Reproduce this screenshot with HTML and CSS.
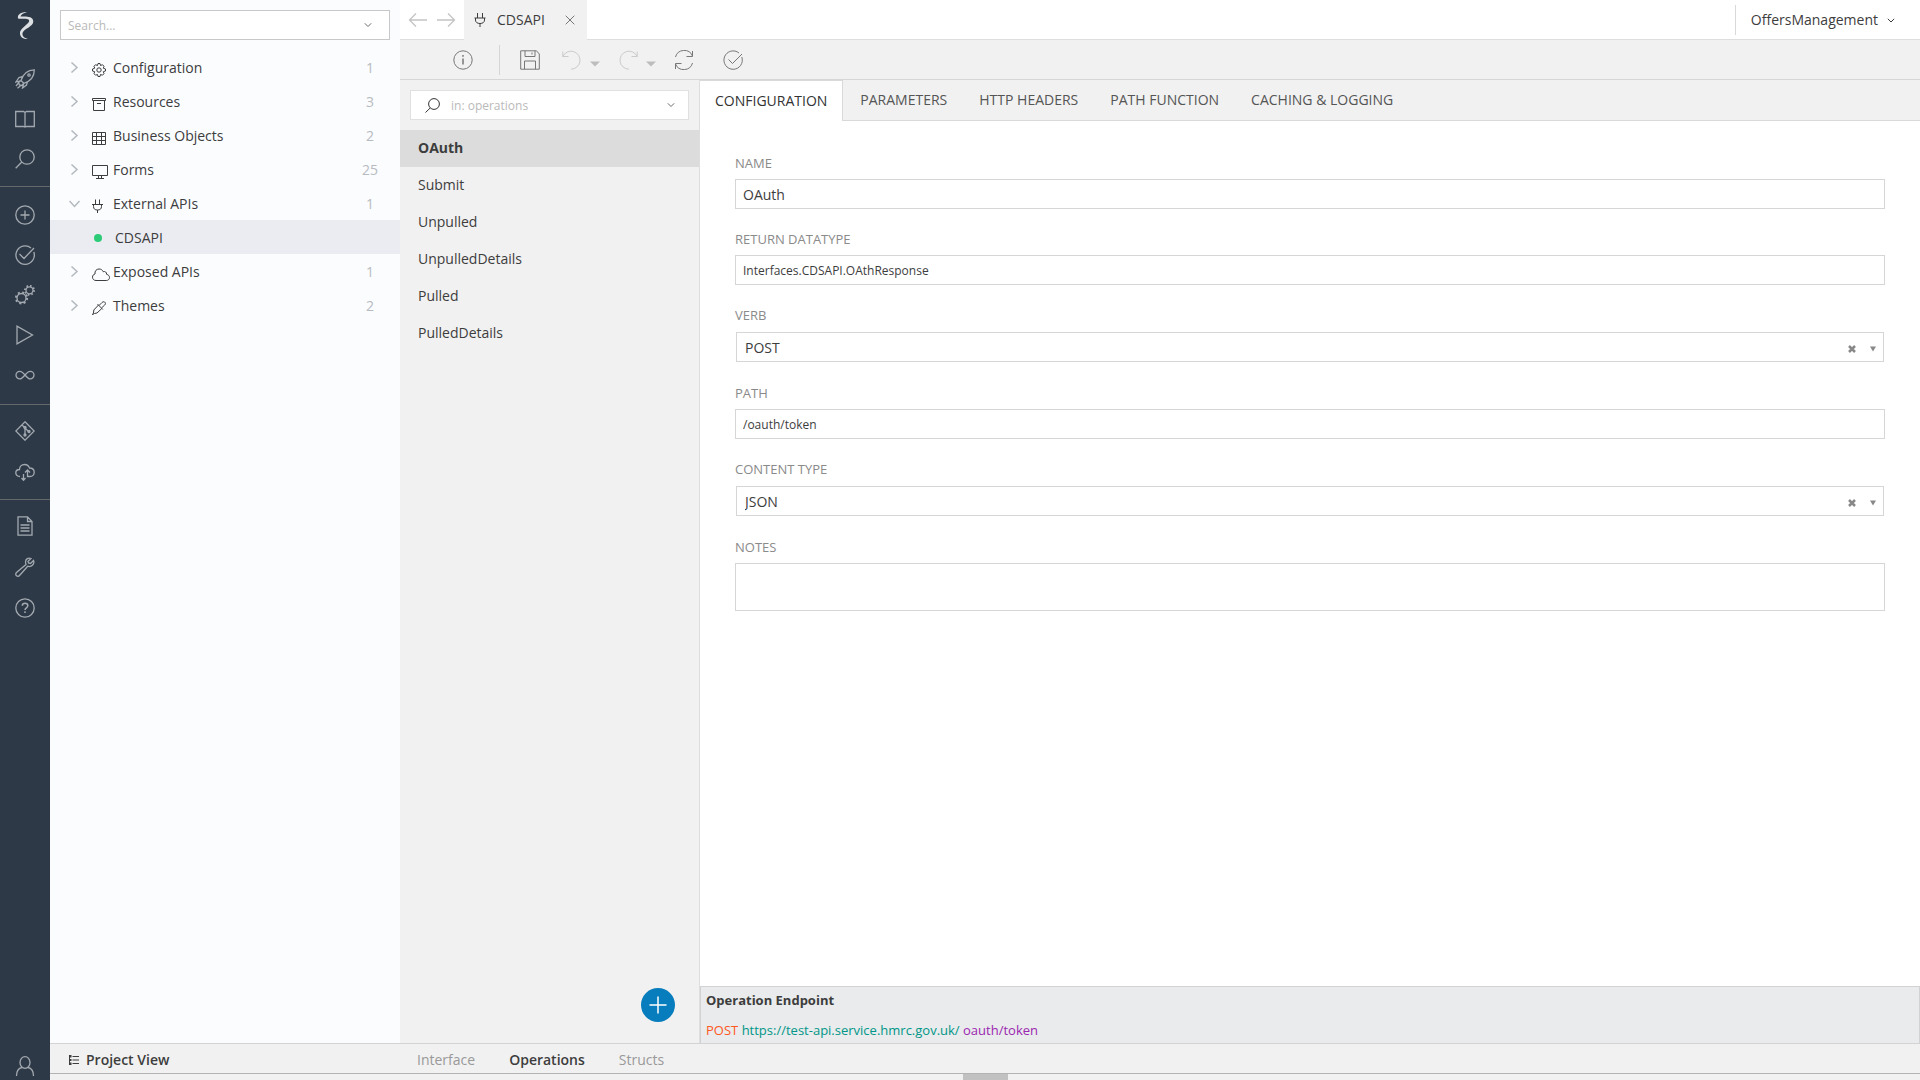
FILE: index.html
```html
<!DOCTYPE html>
<html lang="en">
<head>
    <meta charset="UTF-8">
    <meta name="viewport" content="width=device-width, initial-scale=1.0">
    <title>OffersManagement - CDSAPI</title>
    <link rel="stylesheet" href="styles.css">
</head>
<body>
    <nav class="rail" aria-label="Main">
        <a href="#" class="rail-logo" aria-label="Home">
            <svg width="20" height="30" viewBox="0 0 20 30"><path class="logo-fill" d="M12 1C6 1 2 3.500 3 7.500C6 8.500 11 6.800 13.500 8.500C17 11.500 6 16 5 21.500C4.500 25.500 8 28.500 13 28C9 27 7 25 7.500 22C9 17.500 18 16 18.300 10.500C18 4.500 10 5.500 5.500 5.500C6 3.500 8 2.500 12 1Z"/></svg>
        </a>
        <div class="rail-group">
            <a href="#" class="rail-link" aria-label="Start"><svg width="20" height="20" viewBox="0 0 20 20"><path d="M6 11.500C8 5 12 1 19.300 .8C19.300 8 15 12.500 8.800 14.300ZM8 7.500L4 8.500L1 13L6 11.500M12.500 12.500L11.500 16L7.500 19L8.800 14.300M6 11.500L3.500 13.500L4.500 16L6.800 16.500L8.800 14.300M3.500 14L1 17M5.800 16.500L2.500 19.300"/><circle cx="14" cy="6" r="1.200"/></svg></a>
            <a href="#" class="rail-link" aria-label="Library"><svg width="20" height="20" viewBox="0 0 20 20"><path d="M.7 2.500H8.500L10 3.500L11.500 2.500H19.300V17.500H11.500L10 18L8.500 17.500H.7ZM10 3.500V18"/></svg></a>
            <a href="#" class="rail-link" aria-label="Search"><svg width="20" height="20" viewBox="0 0 20 20"><circle cx="12" cy="8" r="7.200"/><path d="M6.800 13L.7 19.200"/></svg></a>
        </div>
        <div class="rail-group">
            <a href="#" class="rail-link" aria-label="Add"><svg width="20" height="20" viewBox="0 0 20 20"><circle cx="10" cy="10" r="9.200"/><path d="M10 5.500V14.500M5.500 10H14.500"/></svg></a>
            <a href="#" class="rail-link" aria-label="Validate"><svg width="20" height="20" viewBox="0 0 20 20"><path d="M16 3A9.200 9.200 0 1 0 18.800 7M4.500 9L9 13.500L19 3"/></svg></a>
            <a href="#" class="rail-link" aria-label="Settings"><svg width="20" height="20" viewBox="0 0 20 20"><circle cx="6.500" cy="13" r="4.500"/><circle class="teeth" cx="6.500" cy="13" r="5.600" stroke-dasharray="2 2.400"/><circle cx="14.500" cy="5.300" r="3.500"/><circle class="teeth" cx="14.500" cy="5.300" r="4.500" stroke-dasharray="1.500 2.030"/></svg></a>
            <a href="#" class="rail-link" aria-label="Run"><svg width="20" height="20" viewBox="0 0 20 20"><path d="M2 1.200V18.800L17.500 10Z"/></svg></a>
            <a href="#" class="rail-link" aria-label="Processes"><svg width="20" height="20" viewBox="0 0 20 20"><path d="M10 10C8 7.500 6.800 6.300 4.800 6.300A3.800 3.800 0 0 0 4.800 13.900C6.800 13.900 8 12.500 10 10C12 7.500 13.200 6.300 15.200 6.300A3.800 3.800 0 0 1 15.200 13.900C13.200 13.900 12 12.500 10 10Z"/></svg></a>
        </div>
        <div class="rail-group rail-group-low">
            <a href="#" class="rail-link" aria-label="Git"><svg width="20" height="20" viewBox="0 0 20 20"><path d="M10 .8L19.200 10L10 19.200L.8 10ZM7 4L10 7V14M10 7L13.500 10.500"/><circle class="dot" cx="10" cy="6.500" r="1"/><circle class="dot" cx="10" cy="14" r="1"/><circle class="dot" cx="14" cy="10.500" r="1"/></svg></a>
            <a href="#" class="rail-link" aria-label="Sync"><svg width="20" height="20" viewBox="0 0 20 20"><path d="M5 14.500C2.500 14.500 .8 13 .8 11C.8 9 2.300 7.500 4.500 7.500C4.500 4.500 6.500 2.500 9.500 2.500C12 2.500 13.800 4 14.500 6C17.500 6 19.200 8 19.200 10.200C19.200 12.500 17.500 14.500 15 14.500H12.500V8.500M10 10.500L12.500 8L15 10.500M8.500 12V18M6.500 16L8.500 18.300L10.500 16"/></svg></a>
        </div>
        <div class="rail-group rail-group-low">
            <a href="#" class="rail-link" aria-label="Logs"><svg width="20" height="20" viewBox="0 0 20 20"><path d="M3 .8H12.500L17 5.500V19.200H3ZM12.500 .8V5.500H17M5.500 9H14.500M5.500 12H14.500M5.500 15H14.500"/></svg></a>
            <a href="#" class="rail-link" aria-label="Tools"><svg width="20" height="20" viewBox="0 0 20 20"><path d="M18.500 3.500L15.500 6.500L13.500 6L13 4.500L16 1.500C13.500 .3 10.500 2 10.500 5C10.500 6 10.700 6.500 11 7.500L1.500 15.500C.5 16.500 .5 18 1.500 18.700C2.500 19.500 3.800 19.300 4.500 18.500L12.700 9.200C16 10.500 20 7.500 18.500 3.500Z"/></svg></a>
            <a href="#" class="rail-link" aria-label="Help"><svg width="20" height="20" viewBox="0 0 20 20"><circle cx="10" cy="10" r="9.200"/><path class="heavy" d="M7.300 7.800C7.300 4.500 12.800 4.500 12.800 7.800C12.800 9.800 10 9.800 10 12M10 13.300V15"/></svg></a>
        </div>
        <a href="#" class="rail-link rail-user" aria-label="Account"><svg width="20" height="20" viewBox="0 0 20 20"><ellipse cx="10" cy="6.500" rx="5" ry="5.800"/><path d="M1.500 20C1.500 14.500 4.500 12 7 11.500M18.500 20C18.500 14.500 15.500 12 13 11.500"/></svg></a>
    </nav>

    <div class="page">
        <div class="workspace">
            <aside class="sidebar">
                <div class="search">
                    <input type="text" class="search-input" placeholder="Search..." aria-label="Search project">
                    <button type="button" class="icon-btn" aria-label="Search options"><svg width="8" height="8" viewBox="0 0 8 8"><path d="M.8 2.300L4 5.500L7.200 2.300"/></svg></button>
                </div>
                <ul class="tree">
                    <li><a href="#" class="tree-row"><svg class="arrow" width="12" height="12" viewBox="0 0 12 12"><path d="M2.500 .5L8 5.500L2.500 10.500"/></svg><svg class="tree-icon" width="18" height="14" viewBox="0 0 18 14"><path d="M5.500 2.500L6 .5H8L8.500 2.500L10.500 1.700L12 3.300L11.300 5.200L13.500 6V8L11.300 8.700L12 10.700L10.500 12.200L8.500 11.500L8 13.500H6L5.500 11.500L3.500 12.200L2 10.700L2.700 8.700L.5 8V6L2.700 5.200L2 3.300L3.500 1.700Z"/><circle cx="7" cy="7" r="2.200"/></svg><span class="tree-text">Configuration</span><span class="count">1</span></a></li>
                    <li><a href="#" class="tree-row"><svg class="arrow" width="12" height="12" viewBox="0 0 12 12"><path d="M2.500 .5L8 5.500L2.500 10.500"/></svg><svg class="tree-icon" width="18" height="14" viewBox="0 0 18 14"><path d="M.5 1.500H13.500V3.500H.5ZM1.500 3.500V13.500H12.500V3.500M5 6.500H9"/></svg><span class="tree-text">Resources</span><span class="count">3</span></a></li>
                    <li><a href="#" class="tree-row"><svg class="arrow" width="12" height="12" viewBox="0 0 12 12"><path d="M2.500 .5L8 5.500L2.500 10.500"/></svg><svg class="tree-icon" width="18" height="14" viewBox="0 0 18 14"><path d="M.5 1.500H13.500V13.500H.5ZM.5 5.500H13.500M.5 9.500H13.500M4.500 1.500V13.500M9.500 1.500V13.500"/></svg><span class="tree-text">Business Objects</span><span class="count">2</span></a></li>
                    <li><a href="#" class="tree-row"><svg class="arrow" width="12" height="12" viewBox="0 0 12 12"><path d="M2.500 .5L8 5.500L2.500 10.500"/></svg><svg class="tree-icon" width="18" height="14" viewBox="0 0 18 14"><path d="M.5 .5H15.500V10.500H.5ZM6.500 10.500V13M9.500 10.500V13M4 13.500H12"/></svg><span class="tree-text">Forms</span><span class="count">25</span></a></li>
                    <li>
                        <a href="#" class="tree-row"><svg class="arrow" width="12" height="12" viewBox="0 0 12 12"><path d="M.5 3L5.500 8.500L10.500 3"/></svg><svg class="tree-icon" width="18" height="14" viewBox="0 0 18 14"><path d="M0 5.500H11M1.500 5.500V7.500C1.500 10 3 11 5.500 11C8 11 9.500 10 9.500 7.500V5.500M3.500 .5V5.500M7.500 .5V5.500M5.500 11V14"/></svg><span class="tree-text">External APIs</span><span class="count">1</span></a>
                        <ul class="tree-children">
                            <li><a href="#" class="tree-leaf"><span class="status"></span>CDSAPI</a></li>
                        </ul>
                    </li>
                    <li><a href="#" class="tree-row"><svg class="arrow" width="12" height="12" viewBox="0 0 12 12"><path d="M2.500 .5L8 5.500L2.500 10.500"/></svg><svg class="tree-icon" width="18" height="14" viewBox="0 0 18 14"><path d="M4 13.500C1.800 13.500 .5 12 .5 10.200C.5 8.500 1.500 7.300 3 7C2.500 4 4.500 2 7 2C9 2 10.500 3 11.200 4.700C13 4 14.800 5.300 14.600 7.300C16.500 7.700 17.500 9 17.500 10.500C17.500 12.200 16.200 13.500 14.300 13.500Z"/></svg><span class="tree-text">Exposed APIs</span><span class="count">1</span></a></li>
                    <li><a href="#" class="tree-row"><svg class="arrow" width="12" height="12" viewBox="0 0 12 12"><path d="M2.500 .5L8 5.500L2.500 10.500"/></svg><svg class="tree-icon" width="18" height="14" viewBox="0 0 18 14"><path d="M5.500 3L10.800 8.500M7 4.500L10 1.500C12 -.5 14.800 2 12.700 4L9.500 7M6.500 4L1.800 9L1.500 12L.3 13.700L2.500 12.500L5 12L9.800 7.500"/></svg><span class="tree-text">Themes</span><span class="count">2</span></a></li>
                </ul>
            </aside>

            <main class="main">
                <header class="topbar">
                    <div class="history">
                        <button type="button" class="icon-btn" aria-label="Back"><svg width="20" height="16" viewBox="0 0 20 16"><path d="M8 1.500L1.500 8L8 14.500M1.500 8H19"/></svg></button>
                        <button type="button" class="icon-btn" aria-label="Forward"><svg width="20" height="16" viewBox="0 0 20 16"><path d="M12 1.500L18.500 8L12 14.500M1 8H18.500"/></svg></button>
                    </div>
                    <div class="file-tab">
                        <svg width="12" height="14" viewBox="0 0 12 14"><path d="M.5 5H11.500M1.500 5V7C1.500 9.500 3.500 10.500 6 10.500C8.500 10.500 10.500 9.500 10.500 7V5M3.500 0V5M8.500 0V5M6 10.500V14"/></svg>
                        <a href="#" class="file-name">CDSAPI</a>
                        <button type="button" class="icon-btn" aria-label="Close CDSAPI"><svg width="10" height="10" viewBox="0 0 10 10"><path d="M.7 .7L9.300 9.300M9.300 .7L.7 9.300"/></svg></button>
                    </div>
                    <button type="button" class="project-menu">OffersManagement<svg width="8" height="8" viewBox="0 0 8 8"><path d="M.8 2.800L4 6L7.200 2.800"/></svg></button>
                </header>

                <div class="toolbar">
                    <button type="button" class="icon-btn" aria-label="Information"><svg width="20" height="20" viewBox="0 0 20 20"><circle cx="10" cy="10" r="9.200"/><path class="heavy" d="M10 5V6.800M10 8.500V14.500"/></svg></button>
                    <span class="toolbar-line"></span>
                    <button type="button" class="icon-btn" aria-label="Save"><svg width="20" height="20" viewBox="0 0 20 20"><path d="M.7 .8H16.500L19.300 4V19.200H.7ZM5 .8V6.500H15V.8M12 2.500V4.500M4.500 19.200V11H15.500V19.200"/></svg></button>
                    <button type="button" class="icon-btn undo" disabled><svg role="img" aria-label="Undo" width="20" height="20" viewBox="0 0 20 20"><path d="M.8 1.500V6.500H6.500M.8 6.500A9 9 0 1 1 9 19.200"/></svg><svg width="10" height="6" viewBox="0 0 10 6"><path class="solid" d="M0 .5H10L5 5.500Z"/></svg></button>
                    <button type="button" class="icon-btn redo" disabled><svg role="img" aria-label="Redo" width="20" height="20" viewBox="0 0 20 20"><path d="M19.200 1.500V6.500H13.500M19.200 6.500A9 9 0 1 0 11 19.200"/></svg><svg width="10" height="6" viewBox="0 0 10 6"><path class="solid" d="M0 .5H10L5 5.500Z"/></svg></button>
                    <button type="button" class="icon-btn refresh" aria-label="Refresh"><svg width="20" height="20" viewBox="0 0 20 20"><path d="M1.500 7A9 9 0 0 1 18.500 6M18.500 1V6.500H12.500M18.500 13A9 9 0 0 1 1.500 14M1.500 19V13.500H7.500"/></svg></button>
                    <button type="button" class="icon-btn" aria-label="Validate"><svg width="20" height="20" viewBox="0 0 20 20"><path d="M16 3A9.200 9.200 0 1 0 18.800 7M5.500 9.500L9.500 13.500L19 4"/></svg></button>
                </div>

                <div class="content">
                    <section class="operations">
                        <div class="search">
                            <svg class="search-icon" width="15" height="15" viewBox="0 0 15 15"><circle cx="9" cy="6" r="5.400"/><path d="M5.200 10L.5 14.500"/></svg>
                            <input type="text" class="search-input" placeholder="in: operations" aria-label="Search operations">
                            <button type="button" class="icon-btn" aria-label="Filter options"><svg width="8" height="8" viewBox="0 0 8 8"><path d="M.8 2.300L4 5.500L7.200 2.300"/></svg></button>
                        </div>
                        <ul class="operation-list">
                            <li><a href="#" class="operation active">OAuth</a></li>
                            <li><a href="#" class="operation">Submit</a></li>
                            <li><a href="#" class="operation">Unpulled</a></li>
                            <li><a href="#" class="operation">UnpulledDetails</a></li>
                            <li><a href="#" class="operation">Pulled</a></li>
                            <li><a href="#" class="operation">PulledDetails</a></li>
                        </ul>
                        <button type="button" class="add-btn" aria-label="Add operation"><svg width="18" height="18" viewBox="0 0 18 18"><path d="M9 .5V17.500M.5 9H17.500"/></svg></button>
                    </section>

                    <section class="detail">
                        <div class="tabs">
                            <a href="#" class="tab active">CONFIGURATION</a>
                            <a href="#" class="tab">PARAMETERS</a>
                            <a href="#" class="tab">HTTP HEADERS</a>
                            <a href="#" class="tab">PATH FUNCTION</a>
                            <a href="#" class="tab">CACHING &amp; LOGGING</a>
                        </div>

                        <form class="form">
                            <div class="field">
                                <label for="name">NAME</label>
                                <input type="text" id="name" class="text-large" value="OAuth">
                            </div>
                            <div class="field">
                                <label for="datatype">RETURN DATATYPE</label>
                                <input type="text" id="datatype" value="Interfaces.CDSAPI.OAthResponse">
                            </div>
                            <div class="field">
                                <label for="verb">VERB</label>
                                <div class="select">
                                    <select id="verb"><option>POST</option></select>
                                    <button type="button" class="icon-btn" aria-label="Clear verb"><svg width="8" height="8" viewBox="0 0 8 8"><path d="M1 1L7 7M7 1L1 7"/></svg></button>
                                    <svg class="select-arrow" width="6" height="6" viewBox="0 0 6 6"><path class="solid" d="M0 .5H6L3 5.500Z"/></svg>
                                </div>
                            </div>
                            <div class="field">
                                <label for="path">PATH</label>
                                <input type="text" id="path" value="/oauth/token">
                            </div>
                            <div class="field">
                                <label for="content-type">CONTENT TYPE</label>
                                <div class="select">
                                    <select id="content-type"><option>JSON</option></select>
                                    <button type="button" class="icon-btn" aria-label="Clear content type"><svg width="8" height="8" viewBox="0 0 8 8"><path d="M1 1L7 7M7 1L1 7"/></svg></button>
                                    <svg class="select-arrow" width="6" height="6" viewBox="0 0 6 6"><path class="solid" d="M0 .5H6L3 5.500Z"/></svg>
                                </div>
                            </div>
                            <div class="field">
                                <label for="notes">NOTES</label>
                                <textarea id="notes"></textarea>
                            </div>
                        </form>

                        <div class="endpoint">
                            <h2>Operation Endpoint</h2>
                            <p><span class="verb">POST</span> <span class="host">https://test-api.service.hmrc.gov.uk/</span> <span class="path">oauth/token</span></p>
                        </div>
                    </section>
                </div>
            </main>
        </div>

        <footer class="footer">
            <a href="#" class="project-view"><svg width="10" height="10" viewBox="0 0 10 10"><path d="M3.500 1.500H10M3.500 5H10M3.500 8.500H10"/><path class="solid" d="M0 0H2.500V2.500H0ZM0 2.500H1V10H0ZM1 4H2.500V6H1ZM1 7.500H2.500V10H1Z"/></svg>Project View</a>
            <a href="#" class="view-link">Interface</a>
            <a href="#" class="view-link active">Operations</a>
            <a href="#" class="view-link">Structs</a>
        </footer>
        <div class="drawer"><span class="drawer-handle"></span></div>
    </div>
</body>
</html>
```

FILE: styles.css
```css
* {
    box-sizing: border-box;
}
body {
    margin: 0;
    display: flex;
    min-height: 100vh;
    font-family: "Open Sans", sans-serif;
    font-size: 14px;
    line-height: 20px;
    color: #3d3d3d;
    background-color: #fff;
}
a {
    color: inherit;
    text-decoration: none;
}
ul {
    list-style: none;
    margin: 0;
    padding: 0;
}
input, select, textarea, button {
    font-family: inherit;
    color: inherit;
}
svg {
    display: block;
    flex: none;
    fill: none;
    stroke: currentColor;
}
svg .solid {
    fill: currentColor;
    stroke: none;
}
svg .heavy {
    stroke-width: 1.5;
}
.icon-btn {
    display: flex;
    align-items: center;
    padding: 0;
    border: none;
    background: none;
    cursor: pointer;
}

/* left icon rail */
.rail {
    display: flex;
    flex-direction: column;
    flex: none;
    width: 50px;
    background-color: #2d3947;
    color: #a3a9b0;
}
.rail-logo {
    display: flex;
    justify-content: center;
    height: 59px;
    padding-top: 11px;
}
.logo-fill {
    fill: #dde0e3;
    stroke: none;
}
.rail-group {
    padding-bottom: 7px;
}
.rail-group + .rail-group {
    padding: 8px 0 9px;
    border-top: 1px solid #65686b;
}
.rail-group + .rail-group-low {
    padding: 5px 0 7px;
}
.rail-link {
    display: flex;
    align-items: center;
    justify-content: center;
    height: 40px;
}
.rail-group-low .rail-link {
    height: 41px;
}
.rail-link svg {
    stroke-width: 1.3;
}
.rail-link .teeth {
    stroke-width: 2;
}
.rail-link .dot {
    fill: currentColor;
}
.rail-user {
    margin-top: auto;
    padding-top: 12px;
}

.page {
    display: flex;
    flex-direction: column;
    flex: 1;
    min-width: 0;
}
.workspace {
    display: flex;
    flex: 1;
}

/* project tree */
.sidebar {
    width: 350px;
    flex: none;
    background-color: #fbfcfe;
}
.search {
    display: flex;
    align-items: center;
    height: 30px;
    margin: 10px;
    padding: 0 17px 0 7px;
    border: 1px solid #c8c8c8;
    background-color: #fff;
    color: #6d6d6d;
}
.search-input {
    flex: 1;
    min-width: 0;
    padding: 0;
    border: none;
    outline: none;
    background: none;
    font-size: 12px;
}
.search-input::placeholder {
    color: #b9b9b9;
}
.tree-row {
    display: flex;
    align-items: center;
    height: 34px;
    padding: 2px 20px 0 19px;
}
.arrow {
    margin-right: 11px;
    stroke-width: 1.5;
    color: #b4b9be;
}
.tree-icon {
    align-self: flex-end;
    margin: 0 3px 7px 0;
}
.tree-text {
    flex: 1;
}
.count {
    width: 20px;
    text-align: center;
    color: #b7bbc1;
}
.tree-leaf {
    display: flex;
    align-items: center;
    gap: 13px;
    height: 34px;
    padding: 2px 44px 0;
    background-color: #ebecf2;
}
.status {
    width: 8px;
    height: 8px;
    border-radius: 50%;
    background-color: #2bcb78;
}

/* open file and project name */
.main {
    display: flex;
    flex-direction: column;
    flex: 1;
    min-width: 0;
}
.topbar {
    display: flex;
    align-items: center;
    height: 40px;
    border-bottom: 1px solid #dedede;
}
.history {
    display: flex;
    gap: 8px;
    padding: 0 8px;
    color: #c4c4c4;
}
.history svg {
    stroke-width: 1.3;
}
.file-tab {
    display: flex;
    align-items: center;
    gap: 11px;
    height: 40px;
    padding: 0 12px 0 10px;
    background-color: #f1f1f1;
}
.file-name {
    margin-right: 9px;
}
.file-tab .icon-btn {
    color: #777;
}
.project-menu {
    display: flex;
    align-items: center;
    gap: 9px;
    height: 30px;
    margin-left: auto;
    padding: 0 25px 0 15px;
    border: none;
    border-left: 1px solid #d9d9d9;
    background: none;
    font-size: 14px;
}

.toolbar {
    display: flex;
    align-items: center;
    height: 40px;
    padding: 1px 53px 0;
    border-bottom: 1px solid #d6d6d6;
    background-color: #f1f1f1;
    color: #777;
}
.toolbar-line {
    height: 30px;
    margin: 0 20px 0 26px;
    border-left: 1px solid #d6d6d6;
}
.undo, .redo {
    gap: 8px;
    color: #cbcbcb;
}
.undo {
    margin-left: 22px;
}
.redo {
    margin-left: 18px;
}
.undo .solid, .redo .solid {
    fill: #bdbdbd;
}
.undo svg + svg, .redo svg + svg {
    margin-top: 8px;
}
.refresh {
    margin: 0 29px 0 18px;
}

/* operation list */
.content {
    display: flex;
    flex: 1;
}
.operations {
    display: flex;
    flex-direction: column;
    width: 300px;
    flex: none;
    border-right: 1px solid #dedede;
    background-color: #f1f1f1;
}
.operations .search {
    padding: 0 13px 0 14px;
    border-color: #e0e0e0;
}
.search-icon {
    margin-right: 11px;
    color: #333;
}
.operation {
    display: block;
    height: 37px;
    padding: 8px 18px;
}
.operation.active {
    font-weight: 700;
    background-color: #dcdcdc;
}
.add-btn {
    display: flex;
    align-items: center;
    justify-content: center;
    width: 34px;
    height: 34px;
    margin: auto 24px 21px auto;
    padding: 0;
    border: none;
    border-radius: 50%;
    background-color: #077dbd;
    color: #fff;
    cursor: pointer;
}
.add-btn svg {
    stroke-width: 1.5;
}

/* operation details */
.detail {
    display: flex;
    flex-direction: column;
    flex: 1;
    min-width: 0;
}
.tabs {
    display: flex;
    height: 41px;
    border-bottom: 1px solid #d9d9d9;
    background-color: #f1f1f1;
}
.tab {
    padding: 10px 16px;
    color: #555;
}
.tab:nth-child(2) {
    padding-left: 17px;
}
.tab.active {
    height: 41px;
    padding: 10px 15px;
    border-top: 1px solid #d9d9d9;
    border-right: 1px solid #d9d9d9;
    background-color: #fff;
    color: #333;
}
.form {
    flex: 1;
    padding: 32px 35px;
}
.field {
    display: flow-root;
    margin-bottom: 20px;
}
.field label {
    display: block;
    height: 20px;
    font-size: 13px;
    color: #8a8a8a;
}
.field input, .field textarea {
    display: block;
    width: 100%;
    height: 30px;
    margin-top: 6px;
    padding: 0 7px;
    border: 1px solid #d6d6d6;
    outline: none;
    font-size: 12px;
}
.field .text-large {
    font-size: 14px;
}
.field textarea {
    height: 48px;
    resize: none;
}
.select {
    display: flex;
    align-items: center;
    height: 30px;
    margin: 7px 1px 1px;
    padding-right: 7px;
    border: 1px solid #d6d6d6;
    color: #888;
}
.select select {
    flex: 1;
    height: 28px;
    padding: 0 8px;
    border: none;
    outline: none;
    appearance: none;
    background: none;
    font-size: 14px;
    color: #3d3d3d;
}
.select .icon-btn {
    margin: 3px 14px 0 0;
}
.select .icon-btn svg {
    stroke-width: 2.5;
}
.select-arrow {
    margin-top: 3px;
}
.endpoint {
    height: 57px;
    padding: 3px 5px;
    border: 1px solid #d0d2d3;
    border-bottom: none;
    background-color: #e9ebec;
    font-size: 13px;
}
.endpoint h2 {
    margin: 0 0 10px;
    font-size: 13px;
    font-weight: 700;
}
.endpoint p {
    margin: 0;
}
.verb {
    color: #ff5722;
}
.host {
    color: #009688;
}
.path {
    color: #9c27b0;
}

/* bottom bar */
.footer {
    display: flex;
    align-items: center;
    gap: 34px;
    height: 31px;
    padding: 2px 19px 0;
    border-top: 1px solid #d3d3d3;
    border-bottom: 1px solid #b2b4b3;
    background-color: #f1f1f1;
}
.project-view {
    display: flex;
    align-items: center;
    gap: 7px;
    width: 314px;
    font-weight: 600;
}
.view-link {
    color: #999;
}
.view-link.active {
    font-weight: 600;
    color: #3d3d3d;
}
.drawer {
    display: flex;
    justify-content: center;
    height: 6px;
    background-color: #f1f1f1;
}
.drawer-handle {
    width: 45px;
    background-color: #c1c1c1;
}
```
